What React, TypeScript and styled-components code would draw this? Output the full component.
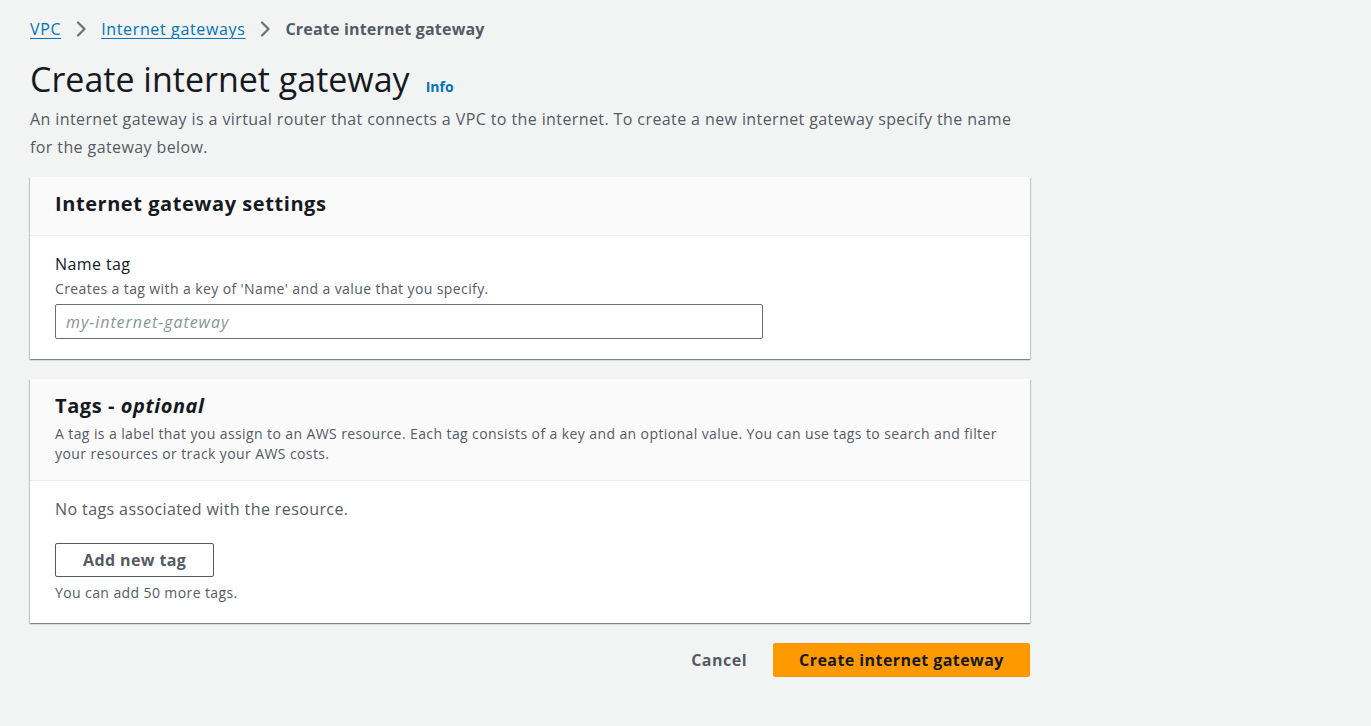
import React from "react";
import styled, { createGlobalStyle } from "styled-components";

const Global = createGlobalStyle`
  html, body { margin: 0; padding: 0; background: #f2f3f3; }
  body { font-family: "Open Sans", "Noto Sans", Arial, sans-serif; color: #16191f; letter-spacing: 0.025em; }
  * { box-sizing: border-box; }
`;

const Page = styled.div`
  padding: 16px 30px 40px 30px;
  width: 1060px;
`;

const Breadcrumbs = styled.nav`
  display: flex;
  align-items: center;
  gap: 15px;
  font-size: 16px;
  line-height: 24px;
  height: 26px;
`;

const Crumb = styled.a`
  color: #0073bb;
  letter-spacing: 0.04em;
  text-decoration: underline;
  text-underline-offset: 3px;
  text-decoration-thickness: 1px;
`;

const Current = styled.span`
  color: #545b64;
  font-weight: 700;
  letter-spacing: 0.012em;
`;

const Chevron = () => (
  <svg width="10" height="16" viewBox="0 0 10 16" fill="none" stroke="#687078" strokeWidth="2.2" strokeLinecap="round" strokeLinejoin="round">
    <path d="M2 1.5l6.5 6.5-6.5 6.5" />
  </svg>
);

const TitleRow = styled.div`
  display: flex;
  align-items: baseline;
  gap: 16px;
  margin: 15px 0 4px 0;
`;

const Title = styled.h1`
  margin: 0;
  font-size: 34px;
  font-weight: 400;
  line-height: 44px;
  color: #16191f;
  letter-spacing: 0;
`;

const Info = styled.a`
  font-size: 14px;
  font-weight: 700;
  color: #0073bb;
  letter-spacing: 0;
`;

const Lead = styled.p`
  margin: 0 0 16px 0;
  font-size: 16px;
  line-height: 28px;
  color: #545b64;
  max-width: 1000px;
`;

const Container = styled.section`
  width: 1000px;
  background: #fff;
  box-shadow: 0 1px 1px 0 rgba(0, 28, 36, 0.3), 1px 1px 1px 0 rgba(0, 28, 36, 0.15), -1px 1px 1px 0 rgba(0, 28, 36, 0.15);
  margin-bottom: 20px;
`;

const Header = styled.header`
  background: #fafafa;
  border-bottom: 1px solid #eaeded;
  padding: 12px 25px 16px 25px;
`;

const HeaderTitle = styled.h2`
  margin: 0;
  font-size: 20px;
  font-weight: 700;
  line-height: 30px;
  color: #16191f;
  letter-spacing: 0.028em;
  em { font-weight: 700; }
`;

const HeaderDesc = styled.p`
  margin: 3px 0 0 0;
  font-size: 14px;
  line-height: 20px;
  color: #545b64;
`;

const Body = styled.div`
  padding: 16px 25px 20px 25px;
`;

const Label = styled.div`
  font-size: 16px;
  line-height: 24px;
  color: #16191f;
`;

const Hint = styled.div<{ $gap?: number }>`
  font-size: 14px;
  line-height: 20px;
  color: #545b64;
  margin-top: ${(p) => p.$gap ?? 0}px;
`;

const Input = styled.input`
  display: block;
  margin-top: 5px;
  width: 708px;
  height: 35px;
  border: 1px solid #687078;
  border-radius: 2px;
  padding: 4px 10px;
  font-family: inherit;
  font-size: 16px;
  &::placeholder { color: #879596; font-style: italic; letter-spacing: 0.06em; }
`;

const Empty = styled.div`
  font-size: 16px;
  line-height: 22px;
  color: #545b64;
  margin-top: 1px;
  margin-bottom: 23px;
`;

const SecondaryButton = styled.button`
  display: block;
  height: 34px;
  padding: 0 27px;
  background: #fff;
  border: 1px solid #545b64;
  border-radius: 2px;
  font-family: inherit;
  font-size: 16px;
  font-weight: 700;
  letter-spacing: 0.025em;
  color: #545b64;
  margin-bottom: 6px;
`;

const Footer = styled.div`
  width: 1000px;
  display: flex;
  justify-content: flex-end;
  align-items: center;
  gap: 26px;
`;

const LinkButton = styled.button`
  background: none;
  border: none;
  padding: 0;
  font-family: inherit;
  font-size: 16px;
  font-weight: 700;
  letter-spacing: 0.03em;
  color: #545b64;
`;

const PrimaryButton = styled.button`
  height: 34px;
  width: 257px;
  background: #ff9900;
  border: 1px solid #ff9900;
  border-radius: 2px;
  font-family: inherit;
  font-size: 16px;
  font-weight: 700;
  letter-spacing: 0.027em;
  color: #16191f;
`;

export default function App() {
  return (
    <>
      <Global />
      <Page>
        <Breadcrumbs>
          <Crumb>VPC</Crumb>
          <Chevron />
          <Crumb>Internet gateways</Crumb>
          <Chevron />
          <Current>Create internet gateway</Current>
        </Breadcrumbs>
        <TitleRow>
          <Title>Create internet gateway</Title>
          <Info>Info</Info>
        </TitleRow>
        <Lead>
          An internet gateway is a virtual router that connects a VPC to the internet. To create a new internet gateway specify the name for the gateway below.
        </Lead>
        <Container>
          <Header>
            <HeaderTitle>Internet gateway settings</HeaderTitle>
          </Header>
          <Body>
            <Label>Name tag</Label>
            <Hint $gap={3}>Creates a tag with a key of 'Name' and a value that you specify.</Hint>
            <Input placeholder="my-internet-gateway" />
          </Body>
        </Container>
        <Container>
          <Header>
            <HeaderTitle>
              Tags - <em>optional</em>
            </HeaderTitle>
            <HeaderDesc>
              A tag is a label that you assign to an AWS resource. Each tag consists of a key and an optional value. You can use tags to search and filter your resources or track your AWS costs.
            </HeaderDesc>
          </Header>
          <Body>
            <Empty>No tags associated with the resource.</Empty>
            <SecondaryButton>Add new tag</SecondaryButton>
            <Hint>You can add 50 more tags.</Hint>
          </Body>
        </Container>
        <Footer>
          <LinkButton>Cancel</LinkButton>
          <PrimaryButton>Create internet gateway</PrimaryButton>
        </Footer>
      </Page>
    </>
  );
}
